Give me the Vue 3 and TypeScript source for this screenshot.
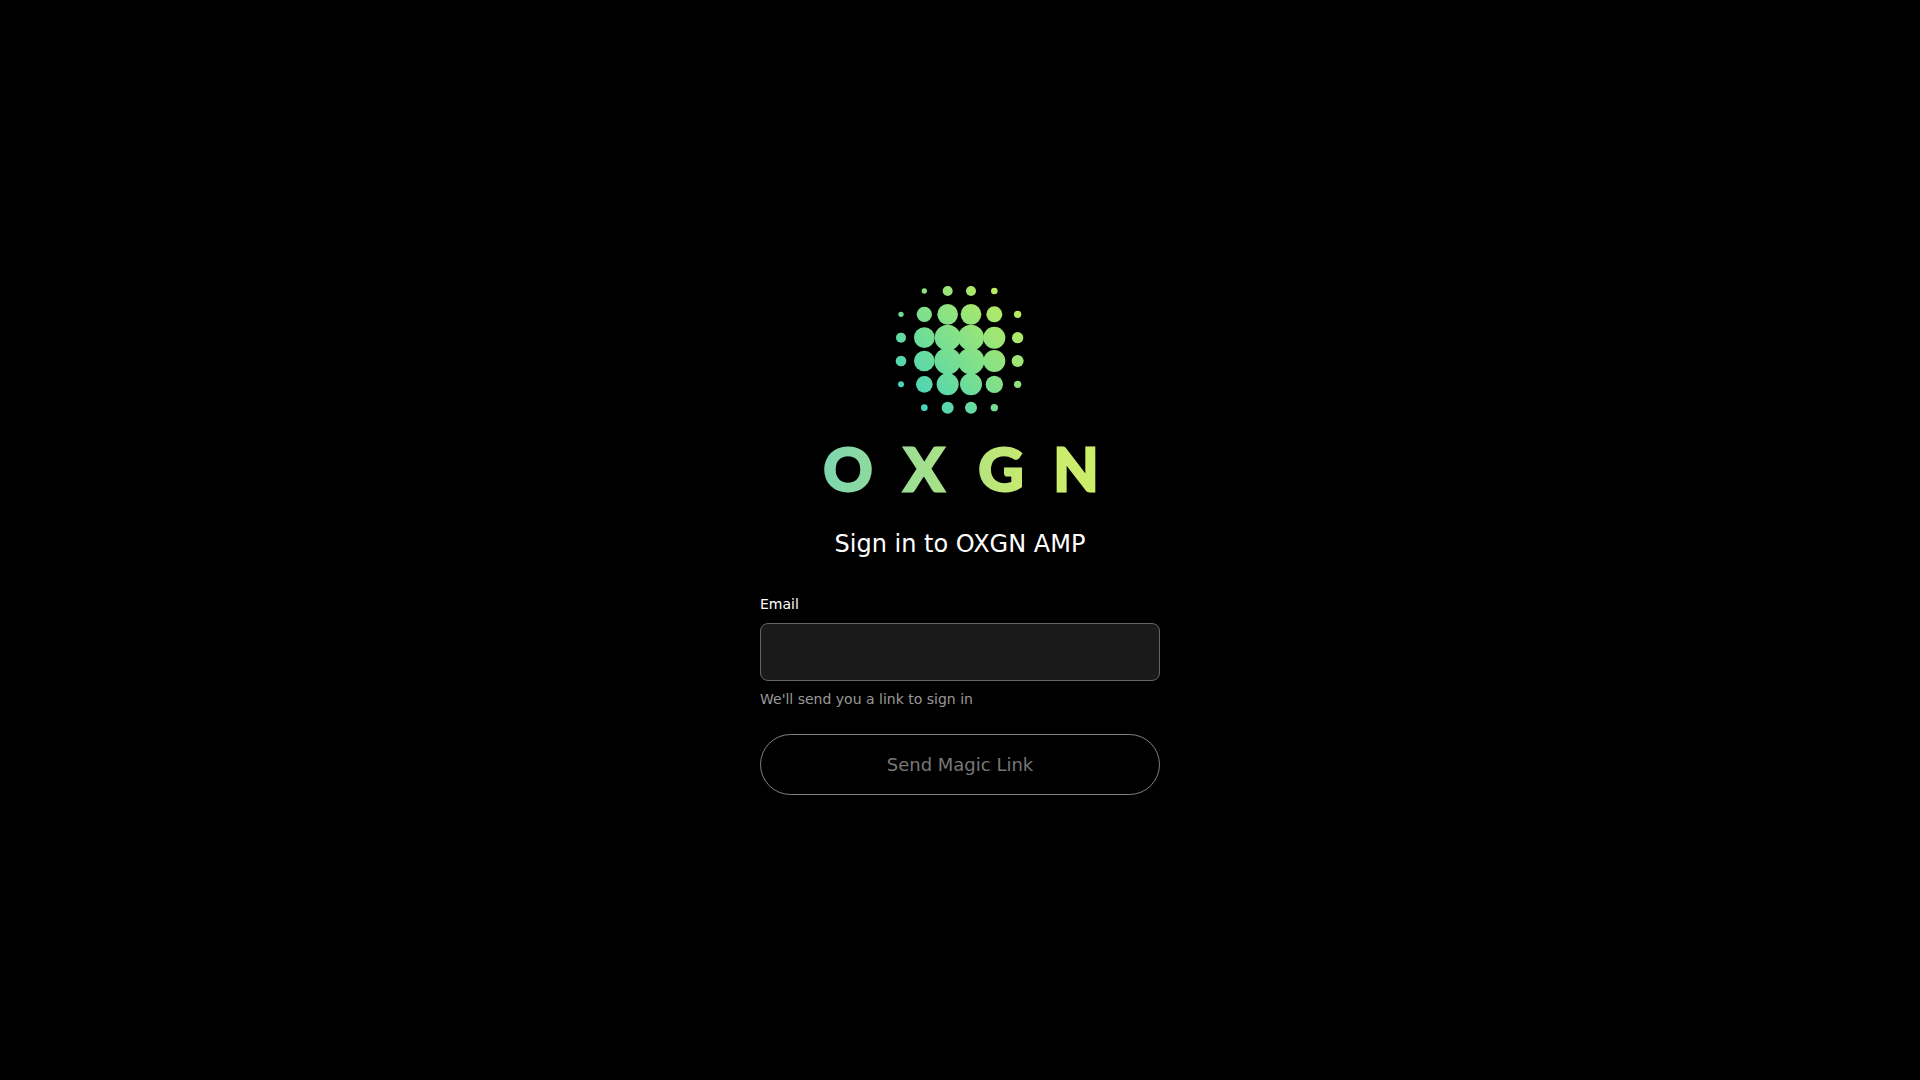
<script setup lang="ts">
const dots: [number, number, number][] = [
  [1, 0, 8], [2, 0, 15], [3, 0, 15], [4, 0, 10],
  [0, 1, 8], [1, 1, 23], [2, 1, 31], [3, 1, 31], [4, 1, 24], [5, 1, 11],
  [0, 2, 15], [1, 2, 31], [2, 2, 39], [3, 2, 39], [4, 2, 33], [5, 2, 17],
  [0, 3, 16], [1, 3, 31], [2, 3, 40], [3, 3, 40], [4, 3, 33], [5, 3, 18],
  [0, 4, 9], [1, 4, 25], [2, 4, 33], [3, 4, 33], [4, 4, 26], [5, 4, 11],
  [1, 5, 10], [2, 5, 18], [3, 5, 18], [4, 5, 11],
]
const circles = dots.map(([c, r, s]) => ({
  cx: 901 + c * 23.33,
  cy: 291 + r * 23.33,
  r: s / 3,
}))
const letters = [
  { t: 'O', x: 848, w: 49 },
  { t: 'X', x: 924, w: 40 },
  { t: 'G', x: 1001, w: 45 },
  { t: 'N', x: 1076, w: 45 },
]
</script>

<template>
  <main class="page">
    <svg class="logo" viewBox="820 285 280 210" width="280" height="210" role="img" aria-label="OXGN logo">
      <defs>
        <linearGradient id="dotGrad" gradientUnits="userSpaceOnUse" x1="905" y1="395" x2="1015" y2="290">
          <stop offset="0" stop-color="#44d4ba" />
          <stop offset="1" stop-color="#c4ee56" />
        </linearGradient>
        <linearGradient id="wordGrad" gradientUnits="userSpaceOnUse" x1="824" y1="470" x2="1096" y2="470">
          <stop offset="0" stop-color="#7dd6ae" />
          <stop offset="0.75" stop-color="#c8ea6e" />
          <stop offset="1" stop-color="#ccee6a" />
        </linearGradient>
      </defs>
      <circle v-for="(d, i) in circles" :key="i" :cx="d.cx" :cy="d.cy" :r="d.r" fill="url(#dotGrad)" />
      <text
        v-for="l in letters"
        :key="l.t"
        class="mark"
        :x="l.x"
        y="490.5"
        text-anchor="middle"
        :textLength="l.w"
        lengthAdjust="spacingAndGlyphs"
        fill="url(#wordGrad)"
        stroke="url(#wordGrad)"
        stroke-width="3"
      >{{ l.t }}</text>
    </svg>
    <h1 class="title">Sign in to OXGN AMP</h1>
    <form class="form" @submit.prevent>
      <label class="label" for="email">Email</label>
      <input id="email" class="input" type="email" />
      <p class="help">We'll send you a link to sign in</p>
      <button class="btn" type="button" disabled>Send Magic Link</button>
    </form>
  </main>
</template>

<style scoped>
.page {
  min-height: 100vh;
  background: #000;
  display: flex;
  flex-direction: column;
  align-items: center;
  justify-content: center;
  font-family: "DejaVu Sans", sans-serif;
  color: #fff;
}
.logo {
  display: block;
  overflow: visible;
}
.mark {
  font-family: Lato, sans-serif;
  font-weight: 700;
  font-size: 59px;
}
.title {
  margin: 33px 0 0;
  font-size: 24px;
  font-weight: 400;
  line-height: 32px;
}
.form {
  width: 400px;
  margin-top: 34px;
  display: flex;
  flex-direction: column;
}
.label {
  font-size: 14px;
  line-height: 21px;
  margin-bottom: 8px;
}
.input {
  box-sizing: border-box;
  height: 58px;
  background: #1a1a1a;
  border: 1px solid #666;
  border-radius: 8px;
  outline: none;
  color: #fff;
}
.help {
  margin: 8px 0 0;
  font-size: 14px;
  line-height: 21px;
  color: #999;
}
.btn {
  box-sizing: border-box;
  height: 61px;
  margin-top: 24px;
  background: transparent;
  border: 1px solid #808080;
  border-radius: 31px;
  color: #777;
  font-family: inherit;
  font-size: 18px;
}
</style>

<style>
body { background: #000; }
</style>
